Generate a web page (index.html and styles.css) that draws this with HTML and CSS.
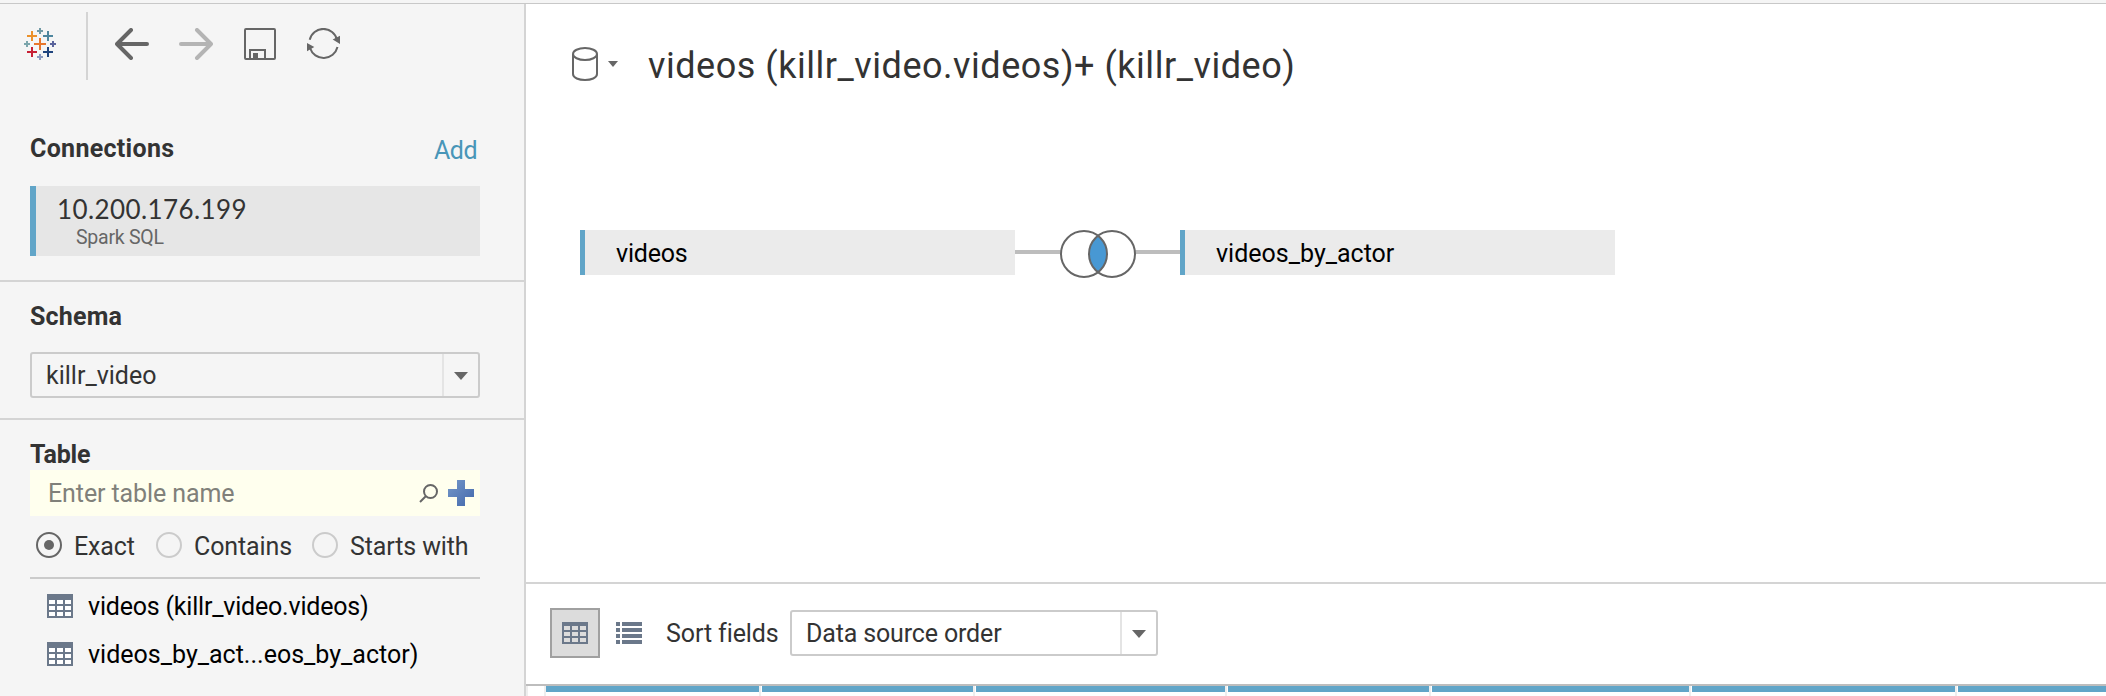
FILE: index.html
```html
<!DOCTYPE html>
<html lang="en"><head><meta charset="utf-8"><title>Data Source</title>
<link rel="stylesheet" href="styles.css"></head>
<body>
<div class="topline"></div>
<div class="app">
<aside class="sidebar">
  <div class="toolbar">
    <svg class="logo" width="32" height="32" viewBox="0 0 32 32" fill="none" stroke-width="2">
      <path stroke="#eb912b" d="M8 3v10M3 8h10"/><path stroke="#4e869e" d="M24 3v10M19 8h10"/>
      <path stroke="#e8762c" d="M16 10v12M10 16h12"/><path stroke="#c72035" d="M8 19v10M3 24h10"/>
      <path stroke="#1f447e" d="M24 19v10M19 24h10"/>
      <path stroke="#7099a5" d="M16 0v6M13 3h6"/><path stroke="#7ba5ab" d="M3 13v6M0 16h6"/>
      <path stroke="#59639b" d="M29 13v6M26 16h6"/><path stroke="#8b9abf" d="M16 26v6M13 29h6"/>
    </svg>
    <span class="bar"></span>
    <svg class="tool back" width="34" height="32" viewBox="0 0 34 32"><path d="M2 16H32M16 2L2 16L16 30"/></svg>
    <svg class="tool forward" width="34" height="32" viewBox="0 0 34 32"><path d="M2 16H32M18 2L32 16L18 30"/></svg>
    <svg class="save" width="32" height="32" viewBox="0 0 32 32"><rect x="1" y="1" width="30" height="30" rx="1"/><path d="M6 31V22H21V31"/><rect class="solid" x="9" y="25" width="5" height="6"/></svg>
    <svg class="refresh" width="34" height="32" viewBox="0 0 34 32"><path d="M2.700 11.800A14 14 0 0 1 30 11.800M30.500 19A14.300 14.300 0 0 1 3 20"/><path class="solid" d="M25.700 11.400L33 7.700V16ZM0 15L7.300 19L0 23.300Z"/></svg>
  </div>
  <section class="connections">
    <div class="heading"><h2 class="t-conn">Connections</h2><a class="add">Add</a></div>
    <div class="connection"><div class="ip">10.200.176.199</div><div class="kind">Spark SQL</div></div>
  </section>
  <section class="schema">
    <h2 class="t-schema">Schema</h2>
    <div class="select"><span class="t-killr">killr_video</span><i class="drop"><svg width="14" height="8"><path d="M0 0H14L7 8Z"/></svg></i></div>
  </section>
  <section class="tables">
    <h2 class="t-table">Table</h2>
    <div class="search"><span class="placeholder">Enter table name</span>
      <svg class="glass" width="20" height="20" viewBox="0 0 20 20"><circle cx="11.5" cy="7.5" r="6.5"/><path d="M7 12L1 18"/></svg>
      <svg class="plus" width="26" height="26" viewBox="0 0 26 26"><defs><linearGradient id="blue" x1="0" y1="0" x2="1" y2="1"><stop offset="0" stop-color="#7598c9"/><stop offset="1" stop-color="#4268ab"/></linearGradient></defs><path fill="url(#blue)" d="M9 0H17V9H26V17H17V26H9V17H0V9H9Z"/></svg>
    </div>
    <div class="radios">
      <i class="radio on"></i><span class="r1">Exact</span>
      <i class="radio"></i><span class="r2">Contains</span>
      <i class="radio"></i><span class="r3">Starts with</span>
    </div>
    <ul class="list">
      <li><svg class="grid" width="26" height="24" viewBox="0 0 26 24"><path class="frame" d="M0 0H26V24H0Z"/><path class="cells" d="M2 6h6v4H2zM10 6h6v4h-6zM18 6h6v4h-6zM2 12h6v4H2zM10 12h6v4h-6zM18 12h6v4h-6zM2 18h6v4H2zM10 18h6v4h-6zM18 18h6v4h-6z"/></svg><span class="l1">videos (killr_video.videos)</span></li>
      <li><svg class="grid" width="26" height="24" viewBox="0 0 26 24"><path class="frame" d="M0 0H26V24H0Z"/><path class="cells" d="M2 6h6v4H2zM10 6h6v4h-6zM18 6h6v4h-6zM2 12h6v4H2zM10 12h6v4h-6zM18 12h6v4h-6zM2 18h6v4H2zM10 18h6v4h-6zM18 18h6v4h-6z"/></svg><span class="l2">videos_by_act...eos_by_actor)</span></li>
    </ul>
  </section>
</aside>
<main class="main">
  <div class="canvas">
    <header class="title">
      <svg class="cylinder" width="26" height="34" viewBox="0 0 26 34"><ellipse cx="13" cy="7" rx="12" ry="6"/><path d="M1 7V27C1 35 25 35 25 27V7"/></svg>
      <svg class="caret" width="10" height="6"><path d="M0 0H10L5 6Z"/></svg>
      <h1>videos (killr_video.videos)+ (killr_video)</h1>
    </header>
    <div class="join">
      <div class="node"><span class="n1">videos</span></div>
      <svg class="venn" width="165" height="50" viewBox="0 0 165 50">
        <path class="wire" d="M0 22H46M120 22H165"/>
        <path class="both" d="M83 5.750A23 23 0 0 1 83 42.250A23 23 0 0 1 83 5.750Z"/>
        <circle cx="69" cy="24" r="23"/><circle cx="97" cy="24" r="23"/>
      </svg>
      <div class="node"><span class="n2">videos_by_actor</span></div>
    </div>
  </div>
  <div class="controls">
    <div class="toggle"><svg width="26" height="22" viewBox="0 0 26 22"><path class="frame" d="M0 0H26V22H0Z"/><path class="cells" d="M2 4h6v4H2zM10 4h6v4h-6zM18 4h6v4h-6zM2 10h6v4H2zM10 10h6v4h-6zM18 10h6v4h-6zM2 16h6v4H2zM10 16h6v4h-6zM18 16h6v4h-6z"/></svg></div>
    <svg class="rows" width="26" height="22" viewBox="0 0 26 22"><path d="M0 0h4v4H0zM6 0h20v4H6zM0 6h4v4H0zM6 6h20v4H6zM0 12h4v4H0zM6 12h20v4H6zM0 18h4v4H0zM6 18h20v4H6z"/></svg>
    <span class="sort">Sort fields</span>
    <div class="select order"><span class="t-order">Data source order</span><i class="drop"><svg width="14" height="8"><path d="M0 0H14L7 8Z"/></svg></i></div>
  </div>
  <div class="columns"><i></i><i></i><i></i><i></i><i></i><i></i><i></i></div>
</main>
</div>
</body></html>
```
FILE: styles.css
```css
* { box-sizing: border-box; }
body { margin: 0; width: 2106px; height: 696px; overflow: hidden; background: #fff; font: 25px/30px Roboto, "Liberation Sans", sans-serif; color: #333; }
h1, h2, ul { margin: 0; padding: 0; list-style: none; }
h2 { font-size: 25px; line-height: 30px; font-weight: 700; }
svg { display: block; flex: none; }
span, h1, h2, a, .ip, .kind { white-space: nowrap; }
.topline { height: 4px; background: #f5f5f5; border-bottom: 1px solid #c8c8c8; }
.app { display: flex; height: 692px; }

/* Sidebar */
.sidebar { width: 526px; flex: none; background: #f5f5f5; border-right: 2px solid #d4d4d4; }
.toolbar { height: 96px; padding-left: 24px; display: flex; align-items: flex-start; }
.toolbar svg { margin-top: 24px; }
.bar { width: 2px; height: 68px; margin: 8px 27px 0 30px; background: #d4d4d4; }
.tool { fill: none; stroke: #666; stroke-width: 4; stroke-linecap: round; stroke-linejoin: round; }
.forward { stroke: #b4b4b4; margin-left: 30px; }
.save, .refresh { fill: none; stroke: #666; stroke-width: 2; margin-left: 31px; }
.solid { fill: #666; stroke: none; }
.connections { height: 182px; padding: 0 44px 0 30px; border-bottom: 2px solid #d4d4d4; }
.heading { display: flex; justify-content: space-between; height: 86px; padding-top: 34px; }
.t-conn { letter-spacing: .3px; }
.t-schema { letter-spacing: .2px; }
.t-table { letter-spacing: -.2px; }
.add { color: #4996b8; padding: 2px 3px 0 0; letter-spacing: -.5px; }
.connection { height: 70px; border-left: 6px solid #61a5c8; background: #e6e6e6; }
.ip { font: 26px/28px Lato, sans-serif; padding: 9px 0 0 21px; letter-spacing: .4px; }
.kind { font-size: 19.5px; line-height: 24px; color: #666; padding: 3px 0 0 40px; letter-spacing: -.25px; }
.schema { height: 138px; padding: 20px 44px 0 30px; border-bottom: 2px solid #d4d4d4; }
.select { display: flex; justify-content: space-between; width: 450px; height: 46px; border: 2px solid #cbcbcb; border-radius: 3px; padding-left: 14px; line-height: 44px; }
.schema .select { margin-top: 20px; }
.drop { width: 36px; border-left: 2px solid #e4e4e4; padding: 18px 0 0 10px; }
.drop svg, .caret { fill: #666; }
.tables { padding: 20px 44px 0 30px; }
.search { display: flex; height: 46px; background: #ffffee; padding-left: 18px; line-height: 47px; }
.placeholder { width: 371px; color: #80807a; letter-spacing: -.1px; }
.glass { margin: 14px 9px 0 0; fill: none; stroke: #666; stroke-width: 2; }
.plus { margin-top: 10px; }
.radios { display: grid; grid-template-columns: 38px 82px 38px 118px 38px 130px; height: 63px; padding: 16px 0 0 6px; border-bottom: 2px solid #cbcbcb; line-height: 30px; letter-spacing: -.12px; }
.radio { width: 26px; height: 26px; border: 2px solid #cbcbcb; border-radius: 50%; display: grid; place-items: center; }
.on { border-color: #666; }
.on::after { content: ""; width: 10px; height: 10px; border-radius: 50%; background: #666; }
.list { padding: 3px 0 0 17px; color: #000; }
.list li { display: flex; align-items: center; height: 48px; gap: 15px; }
.list span { padding-top: 2px; }
.l1 { letter-spacing: -.2px; }
.frame { fill: #6b788a; }
.cells { fill: #fff; }

/* Join canvas */
.main { width: 1580px; }
.canvas { height: 580px; border-bottom: 2px solid #d4d4d4; }
.title { display: flex; height: 226px; padding: 43px 0 0 46px; }
h1 { font-size: 36px; line-height: 38px; font-weight: 400; margin-left: 30px; letter-spacing: .53px; }
.cylinder { fill: none; stroke: #666; stroke-width: 2; }
.caret { margin: 14px 0 0 10px; }
.join { display: flex; padding-left: 54px; color: #000; }
.node { width: 435px; height: 45px; background: #ebebeb; border-left: 5px solid #61a5c8; line-height: 47px; padding-left: 31px; }
.n1 { letter-spacing: -.2px; }
.venn { fill: none; stroke: #666; stroke-width: 2; }
.wire { stroke: #bdbdbd; stroke-width: 4; }
.both { fill: #4898d3; stroke: none; }

/* Grid controls */
.controls { height: 102px; border-bottom: 2px solid #bdbdbd; display: flex; align-items: center; padding-left: 24px; padding-bottom: 2px; }
.toggle { width: 50px; height: 50px; background: #dcdcdc; border: 2px solid #a0a0a0; display: grid; place-items: center; }
.toggle .cells { fill: #dcdcdc; }
.rows { margin: 0 24px 0 16px; fill: #6b788a; }
.sort { width: 124px; line-height: 32px; padding-top: 1px; letter-spacing: -.1px; }
.order { width: 368px; }
.t-order { letter-spacing: -.15px; }
.columns { display: grid; grid-template-columns: 215px 213px 251px 203px 259px 265px 150px; gap: 1px; height: 10px; padding-left: 18px; border-left: 2px solid #eee; }
.columns i { background: linear-gradient(#61a5c8 6px, #fff 6px); border-right: 2px solid #eee; }
.columns i:first-child { border-left: 2px solid #eee; margin-left: -2px; }
```
